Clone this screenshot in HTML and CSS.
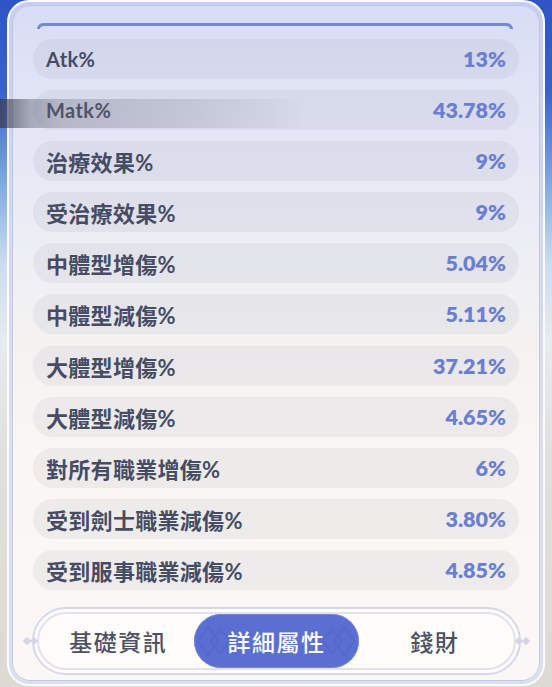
FILE: index.html
```html
<!DOCTYPE html>
<html lang="zh-Hant">
<head>
<meta charset="utf-8">
<title>詳細屬性</title>
<link rel="stylesheet" href="styles.css">
</head>
<body>
<div class="panel">
  <div class="divider">
    <svg width="476" height="6" viewBox="0 0 476 6"><path d="M1.5 5.5 Q2.5 1.5 7 1.5 H469 Q473.5 1.5 474.5 5.5" fill="none" stroke="#7588d4" stroke-width="3" stroke-linecap="round"/></svg>
  </div>
  <ul class="stats">
    <li class="row"><span class="label">Atk%</span><span class="value">13%</span></li>
    <li class="row"><span class="label">Matk%</span><span class="value">43.78%</span></li>
    <li class="row"><span class="label cjk">治療效果%</span><span class="value">9%</span></li>
    <li class="row"><span class="label cjk">受治療效果%</span><span class="value">9%</span></li>
    <li class="row"><span class="label cjk">中體型增傷%</span><span class="value">5.04%</span></li>
    <li class="row"><span class="label cjk">中體型減傷%</span><span class="value">5.11%</span></li>
    <li class="row"><span class="label cjk">大體型增傷%</span><span class="value">37.21%</span></li>
    <li class="row"><span class="label cjk">大體型減傷%</span><span class="value">4.65%</span></li>
    <li class="row"><span class="label cjk">對所有職業增傷%</span><span class="value">6%</span></li>
    <li class="row"><span class="label cjk">受到劍士職業減傷%</span><span class="value">3.80%</span></li>
    <li class="row"><span class="label cjk">受到服事職業減傷%</span><span class="value">4.85%</span></li>
  </ul>
  <div class="tabs-outer">
    <span class="orn orn-l1"></span><span class="orn orn-l2"></span>
    <span class="orn orn-r1"></span><span class="orn orn-r2"></span>
    <div class="tabs">
      <div class="tab">基礎資訊</div>
      <div class="tab active">
        <svg class="pill-deco" width="164" height="54" viewBox="0 0 164 54">
          <path d="M4 27 L14 13 L24 27 L14 41 Z M16 27 L26 15 L36 27 L26 39 Z" fill="none" stroke="#4d61c6" stroke-width="2" opacity="0.4"/>
          <path d="M160 27 L150 13 L140 27 L150 41 Z M148 27 L138 15 L128 27 L138 39 Z" fill="none" stroke="#4d61c6" stroke-width="2" opacity="0.4"/>
        </svg>
        <span class="tab-text">詳細屬性</span>
      </div>
      <div class="tab">錢財</div>
    </div>
  </div>
</div>
<div class="shade"></div>
</body>
</html>
```

FILE: styles.css
```css
html, body {
  margin: 0;
  padding: 0;
  height: 687px;
  overflow: hidden;
}

body {
  position: relative;
  font-family: Lato, "Noto Sans CJK TC", "Noto Sans", sans-serif;
  background: linear-gradient(180deg,
    #2d55c6 0px,
    #3862c9 90px,
    #86aee0 190px,
    #c9dcef 260px,
    #e6ebee 340px,
    #e0e0dc 460px,
    #dcdad3 687px);
}

.panel {
  position: relative;
  box-sizing: border-box;
  margin: 0 7px;
  height: 686px;
  border: 2px solid #fbfbff;
  border-radius: 22px;
  padding: 21px 24px 0;
  display: flex;
  flex-direction: column;
  background: linear-gradient(180deg,
    #d6dcf5 0px,
    #dfe2f5 60px,
    #e5e7f5 150px,
    #eeeef4 250px,
    #f5f3f1 350px,
    #f9f7f3 450px,
    #faf8f5 687px);
  box-shadow: inset 0 0 0 4px rgba(176, 186, 236, 0.4);
}

.panel::before {
  content: "";
  position: absolute;
  inset: 3px;
  border: 1px solid rgba(180, 184, 228, 0.55);
  border-radius: 19px;
  pointer-events: none;
}

.divider {
  height: 6px;
  margin: 0 6px 0 4px;
  line-height: 0;
}

.stats {
  list-style: none;
  margin: 10px 0 0;
  padding: 0;
  display: flex;
  flex-direction: column;
  gap: 11.1px;
}

.row {
  height: 40px;
  box-sizing: border-box;
  border-radius: 20px;
  background: rgba(90, 92, 130, 0.075);
  display: flex;
  align-items: center;
  justify-content: space-between;
  padding: 0 13px;
  font-size: 20px;
  font-weight: 700;
}

.label {
  color: #464c64;
  letter-spacing: 0.4px;
}

.label.cjk {
  font-size: 22px;
  letter-spacing: 0.3px;
}

.value {
  color: #6a7fd1;
  font-size: 21.5px;
  font-weight: 800;
}

.tabs-outer {
  position: relative;
  box-sizing: border-box;
  height: 68px;
  margin: 17px -2px 0 -1px;
  border: 2px solid #d9d6ec;
  border-radius: 34px;
  padding: 3px;
  background: #fefefe;
}

.orn {
  position: absolute;
  top: 29px;
  width: 6px;
  height: 6px;
  background: #d6d3ea;
  transform: rotate(45deg);
}
.orn-l1 { left: -10px; }
.orn-l2 { left: -3px; }
.orn-r1 { right: -10px; }
.orn-r2 { right: -3px; }

.tabs {
  box-sizing: border-box;
  height: 100%;
  border: 2px solid #e3e0f1;
  border-radius: 29px;
  background: #fdfcf9;
  display: grid;
  grid-template-columns: 1fr 1fr 1fr;
  align-items: stretch;
}

.tab {
  position: relative;
  display: flex;
  align-items: center;
  justify-content: center;
  font-family: "Noto Sans CJK TC", sans-serif;
  font-size: 23px;
  font-weight: 500;
  letter-spacing: 1.5px;
  color: #4d5163;
}

.tab.active {
  margin: 0 -3px;
  border-radius: 27px;
  background: #5b6fd3;
  color: #ffffff;
  overflow: hidden;
  box-shadow: inset 0 0 0 1px rgba(120, 138, 228, 0.8);
}

.pill-deco {
  position: absolute;
  left: 0;
  top: 0;
  width: 100%;
  height: 100%;
}

.tab-text {
  position: relative;
}

.shade {
  position: absolute;
  left: 0;
  top: 99px;
  width: 305px;
  height: 29px;
  pointer-events: none;
  background: linear-gradient(90deg,
    rgba(55, 58, 75, 0.72) 0%,
    rgba(65, 68, 85, 0.6) 4%,
    rgba(85, 88, 105, 0.42) 10%,
    rgba(100, 102, 120, 0.3) 20%,
    rgba(110, 112, 130, 0.2) 60%,
    rgba(120, 122, 140, 0.08) 88%,
    rgba(120, 122, 140, 0) 100%);
}
```
